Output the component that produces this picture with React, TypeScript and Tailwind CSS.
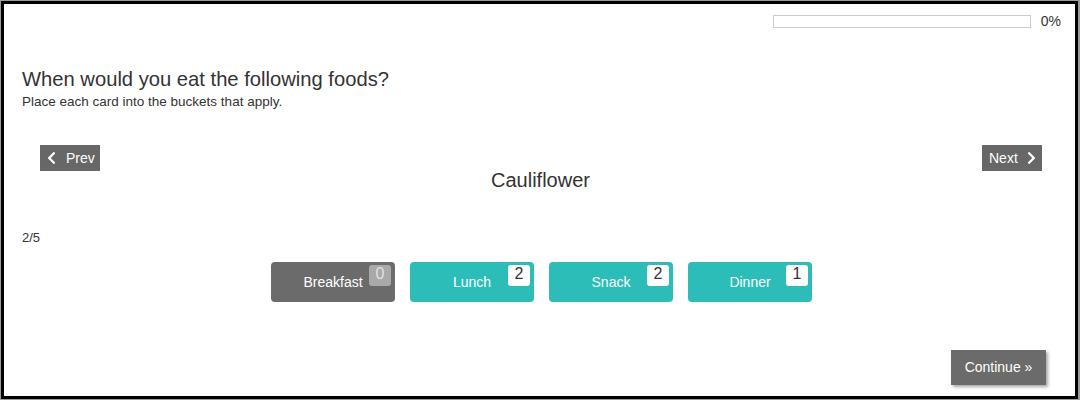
import { FaChevronLeft, FaChevronRight } from "react-icons/fa";

type Bucket = { label: string; count: number; active: boolean };

const buckets: Bucket[] = [
  { label: "Breakfast", count: 0, active: false },
  { label: "Lunch", count: 2, active: true },
  { label: "Snack", count: 2, active: true },
  { label: "Dinner", count: 1, active: true },
];

function BucketButton({ bucket }: { bucket: Bucket }) {
  return (
    <div
      className={
        bucket.active
          ? "relative w-[124px] h-[40px] rounded-[4px] bg-[#2cbdb8] flex items-center justify-center"
          : "relative w-[124px] h-[40px] rounded-[4px] bg-[#6b6b6b] flex items-center justify-center"
      }
    >
      <span className="text-white text-[14px] leading-none">{bucket.label}</span>
      <span
        className={
          bucket.active
            ? "absolute top-[3px] right-[4px] w-[22px] h-[21px] rounded-[3px] bg-white text-[#333] text-[16px] leading-[18px] text-center"
            : "absolute top-[3px] right-[4px] w-[22px] h-[21px] rounded-[3px] bg-[#a9a9a9] text-[#e2e2e2] text-[16px] leading-[18px] text-center"
        }
      >
        {bucket.count}
      </span>
    </div>
  );
}

export default function App() {
  return (
    <div
      className="w-[1080px] h-[400px] bg-[#9c9c9c] pt-[1px] pl-[1px]"
      style={{ fontFamily: '"Liberation Sans", Arial, sans-serif' }}
    >
      <div className="w-[1077px] h-[398px] border-[3px] border-black bg-white flex flex-col text-[#333]">
        {/* progress */}
        <div className="flex items-center justify-end pr-[14px] pt-[10px]">
          <div className="w-[258px] h-[13px] border border-[#cccccc] bg-white" />
          <span className="ml-[10px] text-[14px] leading-none">0%</span>
        </div>

        {/* question */}
        <div className="px-[18px] mt-[39px]">
          <h1 className="text-[20.2px] leading-[24px]">When would you eat the following foods?</h1>
          <p className="text-[13.5px] leading-[16px] mt-[3px]">Place each card into the buckets that apply.</p>
        </div>

        {/* card navigation */}
        <div className="flex justify-between pl-[36px] pr-[33px] mt-[35px]">
          <button
            type="button"
            className="w-[60px] h-[26px] bg-[#676767] text-white text-[14px] flex items-center pl-[7px] gap-[10px]"
          >
            <FaChevronLeft className="w-[9px] h-[14px]" />
            <span>Prev</span>
          </button>
          <button
            type="button"
            className="w-[60px] h-[26px] bg-[#676767] text-white text-[14px] flex items-center pl-[7px] gap-[9px]"
          >
            <span>Next</span>
            <FaChevronRight className="w-[9px] h-[14px]" />
          </button>
        </div>
        <div className="text-center text-[20px] leading-[24px] -mt-[3px] pl-[2px]">Cauliflower</div>

        <div className="px-[18px] mt-[38px] text-[13px] leading-[16px]">2/5</div>

        {/* buckets */}
        <div className="flex justify-center gap-[15px] mt-[16px] pl-[4px]">
          {buckets.map((b) => (
            <BucketButton key={b.label} bucket={b} />
          ))}
        </div>

        {/* continue */}
        <div className="flex justify-end pr-[29px] mt-[48px]">
          <button
            type="button"
            className="w-[95px] h-[35px] bg-[#6b6b6b] text-white text-[14px] shadow-[2px_2px_3px_rgba(0,0,0,0.35)]"
          >
            Continue »
          </button>
        </div>
      </div>
    </div>
  );
}
